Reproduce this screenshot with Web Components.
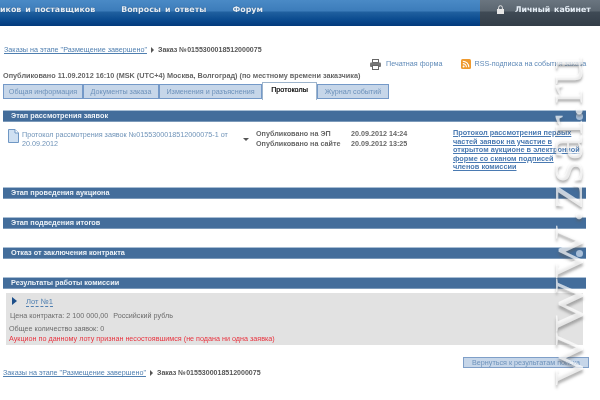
<!DOCTYPE html>
<html lang="ru">
<head>
<meta charset="utf-8">
<title>Заказ №0155300018512000075</title>
<style>
  html, body { margin: 0; height: 400px; overflow: hidden; background: #fff; }
  body {
    width: 600px;
    position: relative;
    font: 7.25px/10px "Liberation Sans", Arial, sans-serif;
    color: #5a5a5a;
    filter: blur(0.35px);
  }
</style>
</head>
<body>
<zk-header></zk-header>

<zk-crumbs style="margin-top: 19px">Заказ №0155300018512000075</zk-crumbs>
<zk-actions></zk-actions>
<zk-published>Опубликовано 11.09.2012 16:10 (MSK (UTC+4) Москва, Волгоград) (по местному времени заказчика)</zk-published>
<zk-tabs></zk-tabs>

<zk-section title="Этап рассмотрения заявок" dot height="65" style="margin-top: 10px">
  <zk-protocol></zk-protocol>
</zk-section>
<zk-section title="Этап проведения аукциона" height="18"></zk-section>
<zk-section title="Этап подведения итогов" height="18"></zk-section>
<zk-section title="Отказ от заключения контракта" dot height="18"></zk-section>
<zk-section title="Результаты работы комиссии" height="4"></zk-section>
<zk-lot></zk-lot>
<zk-back>Вернуться к результатам поиска</zk-back>
<zk-crumbs style="margin-left: -1px">Заказ №0155300018512000075</zk-crumbs>

<zk-watermark>.zsar.ru</zk-watermark>

<script>
function define(name, html, init) {
  customElements.define(name, class extends HTMLElement {
    connectedCallback() {
      if (this.shadowRoot) return
      const shadow = this.attachShadow({ mode: "open" })
      shadow.innerHTML = html
      if (init) init(this, shadow)
    }
  })
}

define("zk-header", `
  <style>
    :host {
      display: flex; height: 26px;
      background: linear-gradient(#4a8ac6 0, #3c7cba 11px, #20609f 12px, #0a4a8e 20px, #023a7c 26px);
      color: #e6eef6;
      font: bold 7.9px/19px "DejaVu Sans", Verdana, sans-serif;
      word-spacing: 1.2px;
    }
    nav { flex: 1; display: flex; gap: 26px; overflow: hidden; text-shadow: 0 0 1px #0b3560; }
    .cabinet {
      width: 120px; box-sizing: border-box; padding: 0 0 7px 17px;
      display: flex; align-items: center; gap: 11px;
      background: linear-gradient(#6a7580 0, #5b6670 11px, #3f4a55 12px, #333d48 26px);
      line-height: 1;
    }
    .cabinet span { font-size: 7.8px; }
    svg { width: 7px; height: 9px; }
  </style>
  <nav><span>иков и поставщиков</span><span>Вопросы и ответы</span><span>Форум</span></nav>
  <div class="cabinet">
    <svg viewBox="0 0 7 9"><path d="M1.6 4V2.6a1.900 1.900 0 0 1 3.800 0V4" fill="none" stroke="#e6e6e6"/><rect y="4" width="7" height="5" fill="#e6e6e6"/></svg>
    <span>Личный кабинет</span>
  </div>
`)

define("zk-crumbs", `
  <style>
    :host { display: flex; align-items: center; height: 10px; padding-left: 4px; font-weight: bold; font-size: 7.05px; color: #555; }
    a { color: #4f7fb0; font-weight: normal; font-size: 7.2px; text-decoration: underline; }
    i { width: 0; height: 0; margin: 0 4px 0 4px; border: 3px solid transparent; border-left: 3px solid #555; border-right-width: 0; }
  </style>
  <a>Заказы на этапе "Размещение завершено"</a><i></i><slot></slot>
`)

define("zk-actions", `
  <style>
    :host { display: flex; align-items: center; height: 12px; margin-top: 3px; padding-left: 370px; color: #5f8ab8; font-size: 7.2px; }
    svg { flex: none; }
    .print { margin-right: 5px; }
    .rss { margin: 0 4px 0 18px; }
    span { white-space: nowrap; }
  </style>
  <svg class="print" width="11" height="11" viewBox="0 0 11 11">
    <rect x="2.500" y="0.500" width="6" height="3" fill="#fff" stroke="#666"/>
    <rect x="0" y="3.500" width="11" height="4.500" rx="1" fill="#777"/>
    <rect x="2.500" y="6.500" width="6" height="4" fill="#fff" stroke="#666"/>
  </svg>
  <span>Печатная форма</span>
  <svg class="rss" width="10" height="10" viewBox="0 0 10 10">
    <rect width="10" height="10" rx="1.500" fill="#ef9a2e"/>
    <circle cx="2.600" cy="7.400" r="1" fill="#fff"/>
    <path d="M1.800 4.600a3.600 3.600 0 0 1 3.600 3.600M1.800 2.200a6 6 0 0 1 6 6" fill="none" stroke="#fff" stroke-width="1.100"/>
  </svg>
  <span>RSS-подписка на события заказа</span>
`)

define("zk-published", `
  <style>
    :host { display: block; height: 10px; margin-top: 1px; padding-left: 3px; font-weight: bold; color: #666; white-space: nowrap; font-size: 7.28px; }
  </style>
  <slot></slot>
`)

define("zk-tabs", `
  <style>
    :host { display: flex; align-items: flex-start; height: 18px; margin-top: 1px; padding-left: 3px; font-size: 7.2px; }
    a {
      box-sizing: border-box; height: 15px; margin-top: 2px; flex: none;
      display: flex; align-items: center; justify-content: center;
      background: #c6d6e9; border: 1px solid #7499c8; color: #6d92bb;
    }
    .on {
      height: 18px; margin-top: 0; background: #fff; color: #222; font-weight: 500;
      border: 1px solid #9db4cc; border-bottom: 0; padding: 0 0 3px 0; text-shadow: 0 0 .3px #222;
    }
  </style>
  <a style="width: 80px">Общая информация</a>
  <a style="width: 76px">Документы заказа</a>
  <a style="width: 103px">Изменения и разъяснения</a>
  <a class="on" style="width: 55px">Протоколы</a>
  <a style="width: 72px">Журнал событий</a>
`)

define("zk-section", `
  <style>
    :host { display: block; margin-left: 3px; width: 583px; }
    .bar {
      box-sizing: border-box; height: 12px; padding-left: 8px;
      display: flex; align-items: center; justify-content: space-between;
      background: #436d9b; border-top: 1px solid #a8bed4; border-bottom: 1px solid #7c9aba;
      color: #edf2f7; font-weight: bold; font-size: 7.3px;
    }
    .dot { width: 7px; height: 7px; margin-right: 3px; border-radius: 50%; background: #a9bfd8; }
  </style>
  <div class="bar"><span class="title"></span><span class="dot"></span></div>
  <div class="body"><slot></slot></div>
`, (host, shadow) => {
  shadow.querySelector(".title").textContent = host.getAttribute("title")
  if (!host.hasAttribute("dot")) shadow.querySelector(".dot").remove()
  shadow.querySelector(".body").style.height = host.getAttribute("height") + "px"
  host.removeAttribute("title")
})

define("zk-protocol", `
  <style>
    :host { display: grid; grid-template-columns: 14px 218px 16px 95px 102px 127px; padding: 7px 0 0 5px; color: #666; font-size: 7.2px; }
    .doc { color: #6f93b8; padding-top: 1px; line-height: 9px; }
    .arrow { width: 0; height: 0; margin: 9px 0 0 3px; border: 3px solid transparent; border-top: 3px solid #555; border-bottom-width: 0; }
    .pub { font-weight: bold; line-height: 10px; color: #666; }
    .link { color: #4a7ab2; text-decoration: underline; line-height: 8.6px; font-weight: bold; font-size: 7.35px; white-space: nowrap; }
  </style>
  <svg width="11" height="14" viewBox="0 0 11 14">
    <path d="M.5.5h6.500l3.500 3.500v9.500h-10z" fill="#cfe0f2" stroke="#6f97c4"/>
    <path d="M7 .5v3.500h3.500" fill="#fff" stroke="#6f97c4"/>
  </svg>
  <div class="doc">Протокол рассмотрения заявок №0155300018512000075-1 от 20.09.2012</div>
  <div class="arrow"></div>
  <div class="pub">Опубликовано на ЭП<br>Опубликовано на сайте</div>
  <div class="pub">20.09.2012 14:24<br>20.09.2012 13:25</div>
  <div class="link">Протокол рассмотрения первых<br>частей заявок на участие в<br>открытом аукционе в электронной<br>форме со сканом подписей<br>членов комиссии</div>
`)

define("zk-lot", `
  <style>
    :host {
      display: block; box-sizing: border-box; height: 52px; width: 577px; margin-left: 6px;
      background: #e2e2e2; color: #6c6c6c;
      line-height: 10px; font-size: 7.2px;
    }
    .head { display: flex; align-items: center; gap: 9px; height: 16px; padding: 0 0 0 6px; }
    .head i { width: 0; height: 0; border: 4.500px solid transparent; border-left: 5px solid #1d4f8a; border-right-width: 0; }
    .head a { color: #4f7fb0; border-bottom: 1px dashed #4f7fb0; line-height: 9px; margin-top: 1px; font-size: 7.600px; }
    .price { padding: 2px 0 0 4px; }
    .price span { margin-left: 3px; }
    .total { padding: 3px 0 0 3px; }
    .fail { padding: 0 0 0 3px; color: #e8333f; }
  </style>
  <div class="head"><i></i><a>Лот №1</a></div>
  <div class="price">Цена контракта: 2 100 000,00 <span>Российский рубль</span></div>
  <div class="total">Общее количество заявок: 0</div>
  <div class="fail">Аукцион по данному лоту признан несостоявшимся (не подана ни одна заявка)</div>
`)

define("zk-back", `
  <style>
    :host {
      display: block; box-sizing: border-box; width: 126px; height: 11px; margin: 12px 0 0 463px;
      background: #c6d6e9; border: 1px solid #7f9fc8; color: #6d92bb;
      line-height: 9px; text-align: center; white-space: nowrap; font-size: 7.2px;
    }
  </style>
  <slot></slot>
`)

define("zk-watermark", `
  <style>
    :host {
      position: absolute; left: 541px; top: 58px; width: 44px; height: 327px;
      pointer-events: none;
    }
    div {
      position: absolute; left: 0; bottom: 0; transform-origin: 0 100%;
      transform: translate(44px, 0) rotate(-90deg);
      font: 58px/44px "Liberation Serif", "Times New Roman", serif;
      color: rgba(255, 255, 255, 0.7);
      text-shadow: -2.5px 0 2.5px rgba(90, 90, 90, 0.45);
      white-space: nowrap;
      display: flex;
    }
    .www { display: block; width: 162px; transform-origin: 0 50%; transform: scaleX(1.27); }
  </style>
  <div><span class="www">www</span><span><slot></slot></span></div>
`)
</script>
</body>
</html>
